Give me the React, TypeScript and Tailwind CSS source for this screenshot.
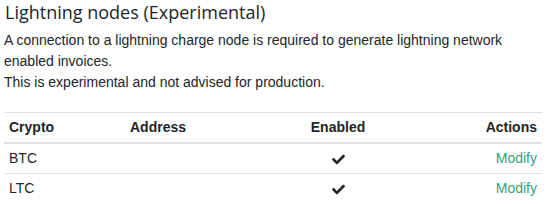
import React from "react";
import { FaCheck } from "react-icons/fa";

const rows = ["BTC", "LTC"];

export default function App() {
  return (
    <div className="w-[548px] h-[204px] bg-white overflow-hidden pl-[4px] pr-[6px] text-[#212529]" style={{ fontFamily: '"Liberation Sans", Arial, sans-serif' }}>
      <h4 className="text-[18px] leading-[24px] font-normal mb-[6px] pl-[1px]" style={{ fontFamily: '"Open Sans", sans-serif' }}>
        Lightning nodes (Experimental)
      </h4>
      <p className="text-[14px] leading-[21px] mb-[19px]">
        A connection to a lightning charge node is required to generate lightning network enabled invoices.
        <br />
        This is experimental and not advised for production.
      </p>
      <table className="w-[538px] text-[14px] leading-[21px] border-collapse table-fixed">
        <colgroup>
          <col className="w-[121px]" />
          <col className="w-[145px]" />
          <col className="w-[136px]" />
          <col className="w-[136px]" />
        </colgroup>
        <thead>
          <tr className="border-t border-[#dee2e6]">
            <th className="text-left font-bold px-[5px] py-[4px] border-b-2 border-[#dee2e6]">Crypto</th>
            <th className="text-left font-bold px-[5px] py-[4px] border-b-2 border-[#dee2e6]">Address</th>
            <th className="text-center font-bold px-[5px] py-[4px] border-b-2 border-[#dee2e6]">Enabled</th>
            <th className="text-right font-bold px-[5px] py-[4px] border-b-2 border-[#dee2e6]">Actions</th>
          </tr>
        </thead>
        <tbody>
          {rows.map((r) => (
            <tr key={r} className="border-t border-[#dee2e6]">
              <td className="px-[5px] py-[4px]">{r}</td>
              <td className="px-[5px] py-[4px]"></td>
              <td className="px-[5px] py-[4px] text-center">
                <span className="inline-flex align-middle">
                  <FaCheck className="w-[13px] h-[13px] text-[#212529]" />
                </span>
              </td>
              <td className="px-[5px] py-[4px] text-right">
                <a href="#" className="text-[#329f80]">Modify</a>
              </td>
            </tr>
          ))}
        </tbody>
      </table>
    </div>
  );
}
